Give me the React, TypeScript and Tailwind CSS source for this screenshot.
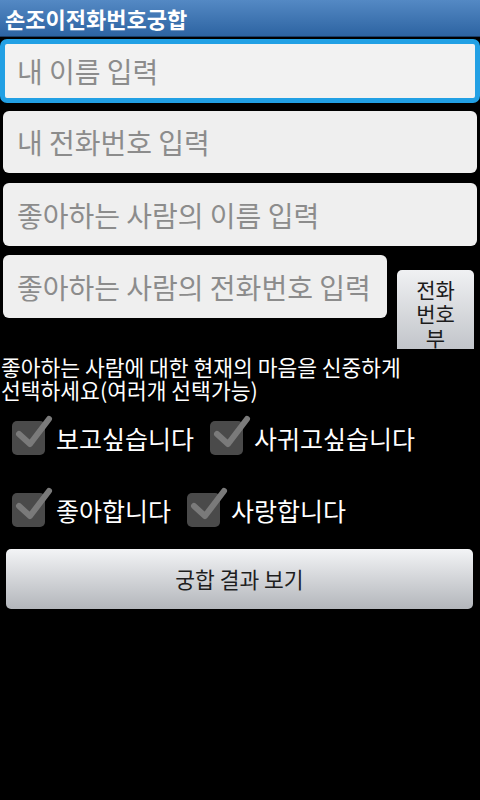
import React from "react";

function Check() {
  return (
    <div className="relative w-[33px] h-[34px] shrink-0 rounded-[5px] bg-[#4a4a4a]">
      <svg
        className="absolute left-0 top-[-6px] overflow-visible"
        width="44"
        height="44"
        viewBox="0 0 44 44"
      >
        <polyline
          points="7,19 18,29 37,4"
          fill="none"
          stroke="#7a7a7a"
          strokeWidth="6"
          strokeLinecap="round"
          strokeLinejoin="round"
        />
      </svg>
    </div>
  );
}

function CheckItem({ label }: { label: string }) {
  return (
    <div className="flex items-center gap-[11px]">
      <Check />
      <span className="text-[25px] leading-none text-white whitespace-nowrap">{label}</span>
    </div>
  );
}

export default function App() {
  return (
    <div className="w-[480px] h-[800px] overflow-hidden bg-black font-['Noto_Sans_CJK_KR','Noto_Sans',sans-serif]">
      {/* title bar */}
      <div className="h-[37px] flex items-center pl-[5px] bg-gradient-to-b from-[#5489c4] to-[#2d64a2] border-b border-[#1b3e68]">
        <span className="text-white font-bold text-[22px] leading-none">손조이전화번호궁합</span>
      </div>

      {/* focused name field */}
      <div className="mt-[2px] h-[64px] rounded-[7px] border-[5px] border-[#22a0e4] bg-[#f2f2f2] flex items-center pl-[12px]">
        <span className="text-[28px] leading-none text-[#8c8c8c]">내 이름 입력</span>
      </div>

      <div className="mt-[8px] mx-[3px] h-[62px] rounded-[6px] bg-[#efefef] flex items-center pl-[14px]">
        <span className="text-[28px] leading-none text-[#8c8c8c]">내 전화번호 입력</span>
      </div>

      <div className="mt-[10px] mx-[3px] h-[63px] rounded-[6px] bg-[#efefef] flex items-center pl-[14px]">
        <span className="text-[28px] leading-none text-[#8c8c8c]">좋아하는 사람의 이름 입력</span>
      </div>

      <div className="mt-[9px] flex items-start">
        <div className="ml-[3px] w-[384px] h-[63px] rounded-[6px] bg-[#efefef] flex items-center pl-[14px]">
          <span className="text-[28px] leading-none text-[#8c8c8c] whitespace-nowrap">좋아하는 사람의 전화번호 입력</span>
        </div>
        <div className="ml-[10px] mt-[15px] w-[77px] h-[79px] rounded-t-[5px] bg-gradient-to-b from-[#f0f1f3] to-[#c2c5ca] flex flex-col items-center pt-[7px] text-[21px] leading-[24px] text-[#1c1c1c]">
          <span>전화</span>
          <span>번호</span>
          <span>부</span>
        </div>
      </div>

      <p className="mt-[6px] pl-[1px] text-[21.5px] leading-[23px] text-white whitespace-nowrap">
        좋아하는 사람에 대한 현재의 마음을 신중하게
        <br />
        선택하세요(여러개 선택가능)
      </p>

      <div className="mt-[13px] h-[48px] pl-[12px] flex items-center gap-[16px]">
        <CheckItem label="보고싶습니다" />
        <CheckItem label="사귀고싶습니다" />
      </div>

      <div className="mt-[24px] h-[48px] pl-[12px] flex items-center gap-[16px]">
        <CheckItem label="좋아합니다" />
        <CheckItem label="사랑합니다" />
      </div>

      <div className="mt-[15px] ml-[6px] mr-[7px] h-[60px] rounded-[5px] bg-gradient-to-b from-[#f3f4f6] to-[#b3b6bb] flex items-center justify-center">
        <span className="text-[21.5px] leading-none text-[#1e1e1e]">궁합 결과 보기</span>
      </div>
    </div>
  );
}
